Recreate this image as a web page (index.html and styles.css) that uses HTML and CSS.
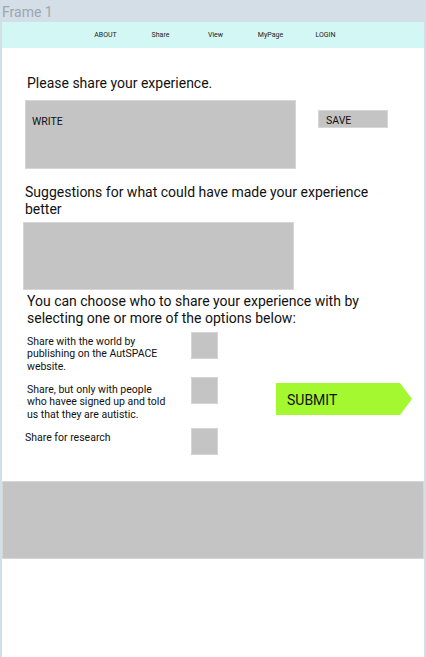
FILE: index.html
```html
<!DOCTYPE html>
<html lang="en">
<head>
<meta charset="utf-8">
<title>Frame 1</title>
<link rel="stylesheet" href="styles.css">
</head>
<body>
<div class="frame-label">Frame 1</div>
<div class="frame">
  <nav class="nav">
    <a class="nav-item">ABOUT</a>
    <a class="nav-item">Share</a>
    <a class="nav-item">View</a>
    <a class="nav-item">MyPage</a>
    <a class="nav-item">LOGIN</a>
  </nav>
  <main class="main">
    <h2 class="heading heading-first">Please share your experience.</h2>
    <div class="write-row">
      <div class="box write-box">WRITE</div>
      <div class="box save-btn">SAVE</div>
    </div>
    <h2 class="heading heading-sugg">Suggestions for what could have made your experience better</h2>
    <div class="box sugg-box"></div>
    <h2 class="heading heading-choose">You can choose who to share your experience with by selecting one or more of the options below:</h2>
    <div class="options-row">
      <div class="options">
        <div class="option opt-1">
          <p class="option-text">Share with the world by<br>publishing on the AutSPACE<br>website.</p>
          <div class="box check"></div>
        </div>
        <div class="option opt-2">
          <p class="option-text">Share, but only with people<br>who havee signed up and told<br>us that they are autistic.</p>
          <div class="box check"></div>
        </div>
        <div class="option opt-3">
          <p class="option-text">Share for research</p>
          <div class="box check"></div>
        </div>
      </div>
      <div class="submit">SUBMIT</div>
    </div>
  </main>
  <footer class="box footer"></footer>
</div>
</body>
</html>
```

FILE: styles.css
```css
* { box-sizing: border-box; }
html, body { margin: 0; padding: 0; }
body {
  background: #d4dee6;
  font-family: Roboto, "Liberation Sans", sans-serif;
  color: #111;
  width: 426px;
  height: 657px;
  overflow: hidden;
}
.frame-label {
  height: 22px;
  padding-left: 2px;
  padding-top: 3px;
  font-size: 14px;
  line-height: 18px;
  color: #9ca7b0;
}
.frame {
  margin: 0 2px;
  background: #fff;
  height: 635px;
}
.nav {
  height: 26px;
  background: #d3f7f4;
  display: flex;
  justify-content: center;
  align-items: center;
  padding-left: 5px;
}
.nav-item {
  width: 55px;
  text-align: center;
  font-size: 7px;
  color: #222;
}
.main {
  padding-left: 21px;
  display: flex;
  flex-direction: column;
  align-items: flex-start;
}
.heading {
  margin: 0;
  font-weight: 400;
  font-size: 14px;
  line-height: 16.4px;
  color: #111;
}
.heading-first { margin-top: 27px; margin-left: 4px; }
.write-row { display: flex; align-items: flex-start; margin-top: 9px; margin-left: 2px; }
.box { background: #c4c4c4; border: 1px solid #d6d6d6; }
.write-box {
  width: 271px;
  height: 69px;
  padding: 15px 0 0 6px;
  font-size: 10.5px;
  line-height: 12px;
}
.save-btn {
  width: 70px;
  height: 18px;
  margin-left: 22px;
  margin-top: 10px;
  padding: 4px 0 0 7px;
  font-size: 10.5px;
  line-height: 12px;
}
.heading-sugg { margin-top: 15px; margin-left: 2px; width: 360px; }
.sugg-box { width: 271px; height: 68px; margin-top: 5px; }
.heading-choose { margin-top: 3px; margin-left: 4px; width: 345px; }
.options-row { display: flex; align-items: flex-start; margin-top: 6px; }
.options { display: flex; flex-direction: column; width: 196px; }
.option { display: flex; align-items: flex-start; }
.option-text {
  margin: 0;
  width: 168px;
  font-size: 10.5px;
  line-height: 12.3px;
  padding-left: 4px;
}
.check { width: 27px; height: 27px; }
.opt-1 .option-text { margin-top: 4px; }
.opt-2 { margin-top: 4px; }
.opt-2 .option-text { margin-top: 7px; }
.opt-3 { margin-top: 7px; }
.opt-3 .option-text { margin-top: 4px; padding-left: 2px; }
.submit {
  margin-left: 57px;
  margin-top: 51px;
  width: 136px;
  height: 32px;
  background: #a3f82f;
  clip-path: polygon(0 0, 124px 0, 136px 50%, 124px 100%, 0 100%);
  display: flex;
  align-items: center;
  padding-left: 11px;
  padding-top: 2px;
  font-size: 14px;
  color: #111;
}
.footer { margin-top: 26px; width: 422px; height: 78px; }
```
